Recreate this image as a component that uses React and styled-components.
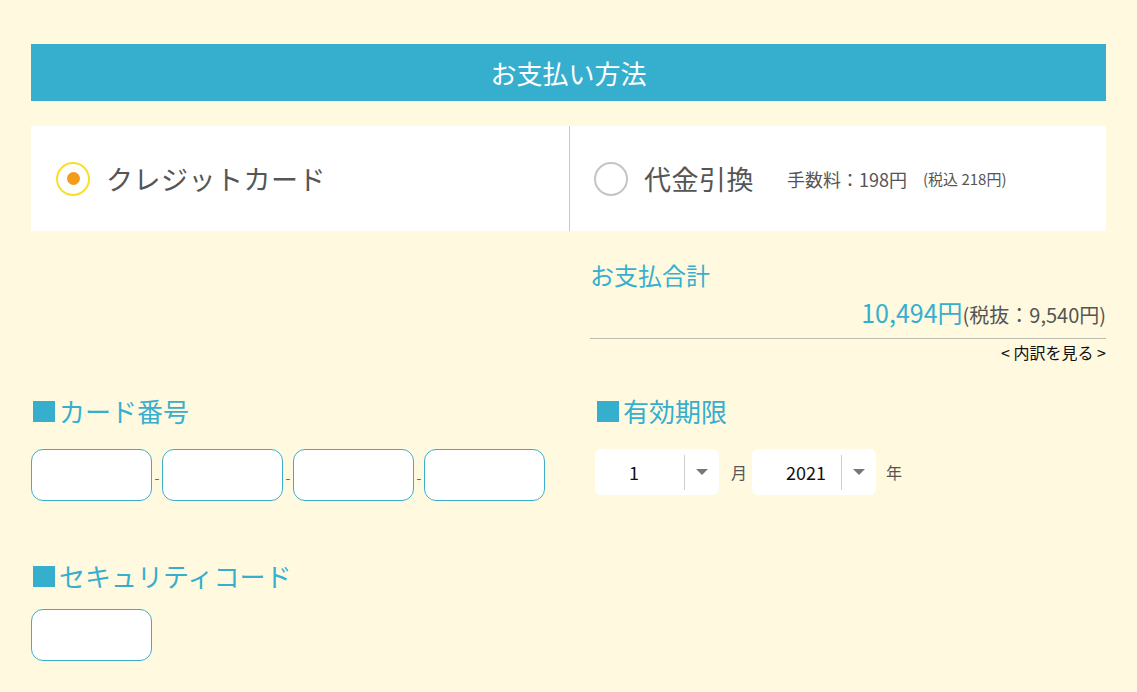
import React from 'react';
import styled, { createGlobalStyle } from 'styled-components';

const BLUE = '#36afcf';

const GlobalStyle = createGlobalStyle`
  html, body {
    margin: 0;
    padding: 0;
    background: #fffadf;
    font-family: "Noto Sans CJK JP", "Noto Sans", sans-serif;
  }
`;

const Page = styled.div`
  padding: 44px 31px 40px;
`;

const Header = styled.div`
  height: 57px;
  background: ${BLUE};
  color: #fff;
  font-size: 26px;
  display: flex;
  align-items: center;
  justify-content: center;
`;

const PaymentBox = styled.div`
  margin-top: 25px;
  height: 105px;
  background: #fff;
  display: grid;
  grid-template-columns: 538px 1fr;
`;

const PayOption = styled.label`
  display: flex;
  align-items: center;
  padding-left: ${props => (props.divided ? '24px' : '25px')};
  border-left: ${props => (props.divided ? '1px solid #c8c8c8' : 'none')};
  color: #555;
  cursor: pointer;
`;

const Radio = styled.span`
  width: 34px;
  height: 34px;
  box-sizing: border-box;
  border-radius: 50%;
  border: 2px solid ${props => (props.checked ? '#f8df2a' : '#c4c4c4')};
  display: flex;
  align-items: center;
  justify-content: center;
  flex-shrink: 0;

  &::after {
    content: '';
    display: ${props => (props.checked ? 'block' : 'none')};
    width: 13px;
    height: 13px;
    border-radius: 50%;
    background: #f59b1b;
  }
`;

const OptionLabel = styled.span`
  font-size: 27px;
  margin-left: 16px;
  letter-spacing: 0.5px;
`;

const Fee = styled.span`
  font-size: 18px;
  margin-left: 33px;
`;

const FeeNote = styled.span`
  font-size: 15px;
  margin-left: 16px;
`;

const Columns = styled.div`
  display: grid;
  grid-template-columns: 538px 1fr;
  column-gap: 0;
`;

const TotalBlock = styled.div`
  grid-column: 2;
  padding-left: 21px;
  margin-top: 26px;
`;

const TotalTitle = styled.div`
  color: ${BLUE};
  font-size: 24px;
  line-height: 36px;
`;

const TotalRow = styled.div`
  display: flex;
  justify-content: flex-end;
  align-items: baseline;
  line-height: 38px;
  padding-bottom: 4px;
  border-bottom: 1px solid #bdbdb0;
`;

const TotalAmount = styled.span`
  color: ${BLUE};
  font-size: 25px;
`;

const TotalTax = styled.span`
  color: #555;
  font-size: 20px;
`;

const DetailLink = styled.a`
  display: block;
  text-align: right;
  font-size: 16px;
  color: #111;
  line-height: 26px;
  text-decoration: none;
`;

const Field = styled.div`
  margin-top: ${props => props.top || '0px'};
  padding-left: ${props => props.indent || '0px'};
`;

const FieldTitle = styled.div`
  color: ${BLUE};
  font-size: 26px;
  line-height: 36px;
  display: flex;
  align-items: center;

  &::before {
    content: '';
    width: 22px;
    height: 21px;
    background: ${BLUE};
    margin: 0 4px 0 2px;
  }
`;

const InputRow = styled.div`
  display: flex;
  align-items: center;
  margin-top: ${props => props.top || '20px'};
`;

const CardInput = styled.input`
  width: 121px;
  height: 52px;
  box-sizing: border-box;
  border: 1px solid #3aaecb;
  border-radius: 12px;
  background: #fff;
  outline: none;
  font-size: 18px;
  padding: 0 10px;
`;

const Dash = styled.span`
  width: 10px;
  text-align: center;
  color: #666;
  font-size: 14px;
  margin-top: 4px;
`;

const Select = styled.div`
  width: 124px;
  height: 46px;
  background: #fff;
  border-radius: 6px;
  display: flex;
  align-items: center;
`;

const SelectValue = styled.span`
  flex: 1;
  padding-left: 34px;
  font-size: 18px;
  color: #111;
`;

const SelectArrow = styled.span`
  width: 34px;
  height: 35px;
  border-left: 1px solid #cfcfcf;
  display: flex;
  align-items: center;
  justify-content: center;

  &::after {
    content: '';
    border-left: 6px solid transparent;
    border-right: 6px solid transparent;
    border-top: 6px solid #777;
  }
`;

const Unit = styled.span`
  font-size: 16px;
  color: #555;
  margin: 0 ${props => props.right || '0px'} 0 ${props => props.left || '0px'};
`;

const App = () => {
  return (
    <>
      <GlobalStyle />
      <Page>
        <Header>お支払い方法</Header>

        <PaymentBox>
          <PayOption>
            <Radio checked />
            <OptionLabel>クレジットカード</OptionLabel>
          </PayOption>
          <PayOption divided>
            <Radio />
            <OptionLabel>代金引換</OptionLabel>
            <Fee>手数料：198円</Fee>
            <FeeNote>(税込 218円)</FeeNote>
          </PayOption>
        </PaymentBox>

        <Columns>
          <TotalBlock>
            <TotalTitle>お支払合計</TotalTitle>
            <TotalRow>
              <TotalAmount>10,494円</TotalAmount>
              <TotalTax>(税抜：9,540円)</TotalTax>
            </TotalRow>
            <DetailLink href="#">&lt; 内訳を見る &gt;</DetailLink>
          </TotalBlock>
        </Columns>

        <Columns>
          <Field top="28px">
            <FieldTitle>カード番号</FieldTitle>
            <InputRow>
              <CardInput />
              <Dash>-</Dash>
              <CardInput />
              <Dash>-</Dash>
              <CardInput />
              <Dash>-</Dash>
              <CardInput />
            </InputRow>
          </Field>
          <Field top="28px" indent="26px">
            <FieldTitle>有効期限</FieldTitle>
            <InputRow>
              <Select>
                <SelectValue>1</SelectValue>
                <SelectArrow />
              </Select>
              <Unit left="12px" right="5px">月</Unit>
              <Select>
                <SelectValue>2021</SelectValue>
                <SelectArrow />
              </Select>
              <Unit left="10px">年</Unit>
            </InputRow>
          </Field>
          <Field top="57px">
            <FieldTitle>セキュリティコード</FieldTitle>
            <InputRow top="15px">
              <CardInput />
            </InputRow>
          </Field>
        </Columns>
      </Page>
    </>
  );
};

export default App;
